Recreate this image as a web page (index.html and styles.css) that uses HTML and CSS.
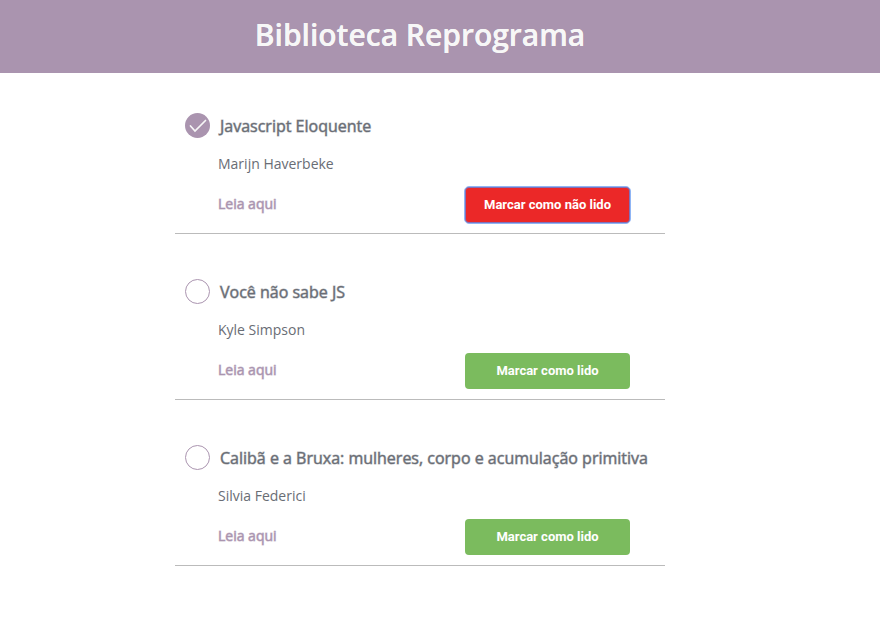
FILE: index.html
```html
<!DOCTYPE html>
<html lang="pt-BR">
<head>
<meta charset="utf-8">
<meta name="viewport" content="width=device-width, initial-scale=1">
<title>Biblioteca Reprograma</title>
<link rel="stylesheet" href="styles.css">
</head>
<body>
<header class="header"><h1 class="header__title">Biblioteca Reprograma</h1></header>
<main class="content">
<ul class="books">
<li class="book">
<div class="book__heading">
<svg class="book__status" viewBox="0 0 25 25" aria-hidden="true"><circle cx="12.5" cy="12.5" r="12.5" fill="#aa94af"/><path d="M5.500 13l4.500 5L20.500 7.500" fill="none" stroke="#f7f7f7" stroke-width="1.700" stroke-linecap="round"/></svg>
<h2 class="book__title">Javascript Eloquente</h2>
</div>
<p class="book__author">Marijn Haverbeke</p>
<div class="book__actions"><a class="book__link" href="#">Leia aqui</a><button class="button button--unread" type="button">Marcar como não lido</button></div>
</li>
<li class="book">
<div class="book__heading">
<svg class="book__status" viewBox="0 0 25 25" aria-hidden="true"><circle cx="12.5" cy="12.5" r="12" fill="#fff" stroke="#aa94af"/></svg>
<h2 class="book__title">Você não sabe JS</h2>
</div>
<p class="book__author">Kyle Simpson</p>
<div class="book__actions"><a class="book__link" href="#">Leia aqui</a><button class="button" type="button">Marcar como lido</button></div>
</li>
<li class="book">
<div class="book__heading">
<svg class="book__status" viewBox="0 0 25 25" aria-hidden="true"><circle cx="12.5" cy="12.5" r="12" fill="#fff" stroke="#aa94af"/></svg>
<h2 class="book__title">Calibã e a Bruxa: mulheres, corpo e acumulação primitiva</h2>
</div>
<p class="book__author">Silvia Federici</p>
<div class="book__actions"><a class="book__link" href="#">Leia aqui</a><button class="button" type="button">Marcar como lido</button></div>
</li>
</ul>
</main>
</body>
</html>
```
FILE: styles.css
```css
* { box-sizing: border-box; }
body { margin: 0; background: #fff; color: #696d75; font-family: "Open Sans", sans-serif; }
.header { padding: 15px 40px 18px 0; background: #aa94af; }
.header__title { margin: 0; color: #f7f7f7; font-size: 30px; line-height: 40px; font-weight: 600; text-align: center; text-shadow: 0 0 0 currentColor; }
.content { padding-right: 40px; }
.books { max-width: 490px; margin: 0 auto; padding: 0; list-style: none; }
.book { padding: 40px 35px 10px 10px; border-bottom: 1px solid #bbb; }
.book + .book { padding-top: 45px; }
.book__heading { display: flex; align-items: center; gap: 10px; margin-right: -30px; }
.book__status { flex: none; width: 25px; height: 25px; }
.book__title,
.book__link { font-weight: 400; -webkit-text-stroke: 1px rgb(105 109 117 / 50%); }
.book__title { margin: 0; padding-top: 2px; font-size: 16px; line-height: 23px; }
.book__author { margin: 15px 0 12px 33px; font-size: 14px; line-height: 22px; }
.book__actions { display: flex; align-items: center; justify-content: space-between; margin-left: 33px; }
.book__link { padding-bottom: 2px; color: #aa94af; font-size: 14px; line-height: 20px; text-decoration: none; -webkit-text-stroke-color: rgb(170 148 175 / 60%); }
.button { width: 165px; height: 36px; padding: 0 6px 1px; border: 0; border-radius: 4px; background: #7bbb5e; color: #fff; font: 700 13px Roboto, sans-serif; }
.button--unread { background: #eb2828; outline: 1px solid #8fb5f5; box-shadow: inset 0 0 0 1px #8070b8; }
```
